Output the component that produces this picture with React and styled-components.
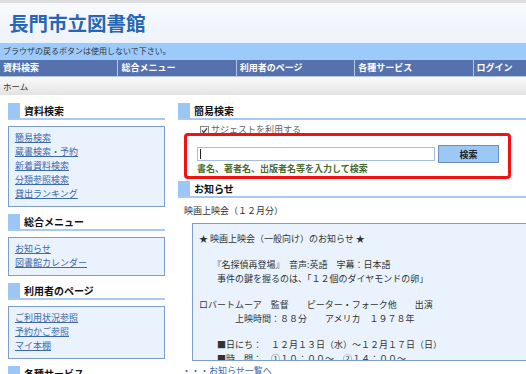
import React from 'react';
import styled, { createGlobalStyle } from 'styled-components';

const GlobalStyle = createGlobalStyle`
  html, body {
    margin: 0;
    padding: 0;
    overflow: hidden;
    background: #fff;
  }
  body {
    font-family: "Noto Sans CJK JP", "Noto Sans", sans-serif;
    color: #333;
  }
`;

const Page = styled.div`
  width: 592px;
`;

const Header = styled.header`
  height: 40px;
  border-top: 3px solid #dedede;
  background: linear-gradient(#f7f9fd, #eef3fa);
  display: flex;
  align-items: center;
  padding-left: 9px;
`;

const Title = styled.h1`
  margin: 0;
  font-size: 19.5px;
  font-weight: 700;
  line-height: 1;
  color: #2766b5;
`;

const Notice = styled.div`
  height: 16px;
  padding-left: 3px;
  background: #9ccbfb;
  font-size: 8px;
  line-height: 16px;
  color: #333;
`;

const Nav = styled.nav`
  display: grid;
  grid-template-columns: repeat(5, 118.4px);
  height: 18px;
  box-sizing: border-box;
  border-top: 1px solid #b3c6e2;
  border-bottom: 1px solid #b3c6e2;
  background: #5572af;
`;

const NavItem = styled.a`
  padding-left: 3px;
  border-right: 1px solid #b3c6e2;
  font-size: 9px;
  font-weight: 700;
  line-height: 16px;
  color: #fff;
  text-decoration: none;
  white-space: nowrap;
`;

const Breadcrumb = styled.div`
  height: 18px;
  padding-left: 3px;
  background: linear-gradient(#fafafa, #e3e3e3);
  font-size: 8.5px;
  line-height: 18px;
  color: #333;
`;

const Body = styled.div`
  display: flex;
  gap: 13px;
  padding: 8px 8px 0;
`;

const Sidebar = styled.aside`
  width: 157px;
  flex: none;
`;

const Main = styled.main`
  flex: 1;
  min-width: 0;
`;

const Heading = styled.h2`
  display: flex;
  align-items: center;
  height: 15px;
  margin: ${(p) => p.$top || 0}px 0 0;
  border-bottom: 2px solid #a9c9f1;
  font-size: 10px;
  font-weight: 700;
  line-height: 15px;
  color: #111;

  &::before {
    content: '';
    width: 12px;
    height: 15px;
    margin-right: 4px;
    background: #9cc6f5;
  }
`;

const LinkBox = styled.div`
  margin: 6px 0 7px;
  padding: 4px 6px 5px;
  border: 1px solid #7d9dd0;
  background: #eaf3fd;
`;

const SideLink = styled.a`
  display: block;
  font-size: 9px;
  line-height: 14px;
  color: #3c68ac;
  text-decoration: underline;
`;

const SearchArea = styled.div`
  position: relative;
  padding: 4px 0 0 19px;
`;

const CheckRow = styled.label`
  display: flex;
  align-items: center;
  gap: 2px;
  padding-left: 3px;
  height: 12px;
  font-size: 9px;
  line-height: 12px;
  color: #666;
`;

const FormRow = styled.div`
  display: flex;
  align-items: center;
  gap: 3px;
  margin-top: 9px;
  height: 18px;
`;

const InputWrap = styled.div`
  position: relative;
  width: 238px;
  height: 14px;

  &::after {
    content: '';
    position: absolute;
    left: 3px;
    top: 2px;
    width: 1px;
    height: 10px;
    background: #222;
  }
`;

const TextInput = styled.input`
  display: block;
  width: 100%;
  height: 14px;
  box-sizing: border-box;
  margin: 0;
  padding: 0 2px;
  border: 1px solid #a7bfdf;
  background: #fff;
  font-size: 9px;
  outline: none;
`;

const SearchButton = styled.button`
  width: 61px;
  height: 18px;
  padding: 0;
  border: 1px solid #6a8fc2;
  background: #9cc8f6;
  font-family: inherit;
  font-size: 9px;
  font-weight: 700;
  color: #222;
`;

const Hint = styled.p`
  margin: 0;
  font-size: 9px;
  font-weight: 700;
  line-height: 12px;
  color: #4b6a2a;
`;

const Highlight = styled.div`
  position: absolute;
  left: 6px;
  top: 13px;
  width: 327px;
  height: 46px;
  box-sizing: border-box;
  border: 3px solid #f21212;
  border-radius: 4px;
  pointer-events: none;
`;

const NewsTitle = styled.p`
  margin: 6px 0 0;
  padding-left: 6px;
  font-size: 9px;
  line-height: 14px;
  color: #333;
`;

const NewsBox = styled.div`
  height: 138px;
  margin: 5px 0 0 14px;
  padding: 8px 6px 0;
  box-sizing: border-box;
  overflow: hidden;
  border: 1px solid #7d9dd0;
  background: #eaf3fd;
`;

const Line = styled.div`
  font-size: 9px;
  line-height: 14.5px;
  white-space: pre;
  color: #333;
`;

const Blank = styled.div`
  height: 11px;
`;

const More = styled.div`
  margin-top: 3px;
  padding-left: 4px;
  font-size: 9px;
  line-height: 14px;
  color: #3c68ac;

  a {
    color: inherit;
  }
`;

const CheckIcon = () => (
  <svg width="9" height="9" viewBox="0 0 9 9">
    <rect x="0.5" y="0.5" width="8" height="8" fill="#f4f4f4" stroke="#8a8a8a" />
    <path d="M2 4.5 L3.8 6.4 L7 2.4" fill="none" stroke="#444" strokeWidth="1.3" />
  </svg>
);

const navItems = ['資料検索', '総合メニュー', '利用者のページ', '各種サービス', 'ログイン'];

const sideMenus = [
  { title: '資料検索', links: ['簡易検索', '蔵書検索・予約', '新着資料検索', '分類参照検索', '貸出ランキング'] },
  { title: '総合メニュー', links: ['お知らせ', '図書館カレンダー'] },
  { title: '利用者のページ', links: ['ご利用状況参照', '予約かご参照', 'マイ本棚'] },
  { title: '各種サービス', links: ['リクエスト', 'レファレンス'] },
];

const newsLines = [
  '★ 映画上映会（一般向け）のお知らせ ★',
  null,
  '　　『名探偵再登場』　音声:英語　字幕：日本語',
  '　　事件の鍵を握るのは、「１２個のダイヤモンドの卵」',
  null,
  'ロバートムーア　監督　　ピーター・フォーク他　　出演',
  '　　　　上映時間：８８分　　アメリカ　１９７８年',
  null,
  '　　■日にち：　１２月１３日（水）～１２月１７日（日）',
  '　　■時　間：　①１０：００～　②１４：００～',
];

const App = () => {
  return (
    <Page>
      <GlobalStyle />
      <Header>
        <Title>長門市立図書館</Title>
      </Header>
      <Notice>ブラウザの戻るボタンは使用しないで下さい。</Notice>
      <Nav>
        {navItems.map((item) => (
          <NavItem key={item}>{item}</NavItem>
        ))}
      </Nav>
      <Breadcrumb>ホーム</Breadcrumb>

      <Body>
        <Sidebar>
          {sideMenus.map((menu) => (
            <div key={menu.title}>
              <Heading>{menu.title}</Heading>
              <LinkBox>
                {menu.links.map((link) => (
                  <SideLink key={link}>{link}</SideLink>
                ))}
              </LinkBox>
            </div>
          ))}
        </Sidebar>

        <Main>
          <Heading>簡易検索</Heading>
          <SearchArea>
            <CheckRow>
              <CheckIcon />
              サジェストを利用する
            </CheckRow>
            <FormRow>
              <InputWrap>
                <TextInput type="text" />
              </InputWrap>
              <SearchButton>検索</SearchButton>
            </FormRow>
            <Hint>書名、著者名、出版者名等を入力して検索</Hint>
            <Highlight />
          </SearchArea>

          <Heading $top={6}>お知らせ</Heading>
          <NewsTitle>映画上映会（１２月分）</NewsTitle>
          <NewsBox>
            {newsLines.map((line, i) =>
              line === null ? <Blank key={i} /> : <Line key={i}>{line}</Line>
            )}
          </NewsBox>
          <More>
            ・・・<a>お知らせ一覧へ</a>
          </More>
        </Main>
      </Body>
    </Page>
  );
};

export default App;
